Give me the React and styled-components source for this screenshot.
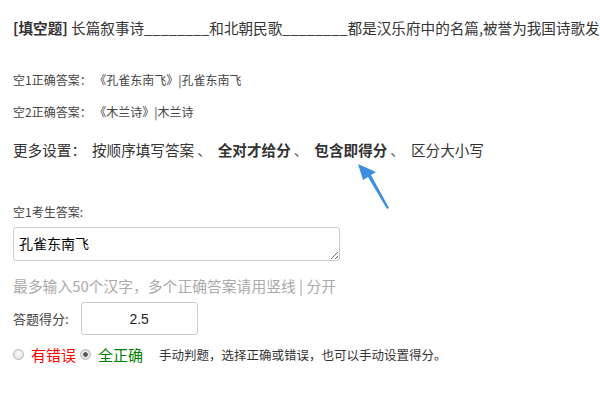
import styled, { createGlobalStyle } from "styled-components";

const GlobalStyle = createGlobalStyle`
body{
    margin:0;
    background:#fff;
    font-family:"Microsoft YaHei","Noto Sans CJK SC",sans-serif;
    color:#333;
}
`

const options = [
    { text: "按顺序填写答案", bold: false },
    { text: "全对才给分", bold: true },
    { text: "包含即得分", bold: true },
    { text: "区分大小写", bold: false },
]

export default function App() {
    return (
        <Page>
            <GlobalStyle />
            <Title><b>[填空题]</b> 长篇叙事诗________和北朝民歌________都是汉乐府中的名篇,被誉为我国诗歌发展史上的双璧</Title>
            <AnswerLine first>空1正确答案： 《孔雀东南飞》|孔雀东南飞</AnswerLine>
            <AnswerLine>空2正确答案： 《木兰诗》|木兰诗</AnswerLine>
            <Settings>
                <SettingsLabel>更多设置：</SettingsLabel>
                {options.map((o, i) => (
                    <span key={o.text}>
                        <Option bold={o.bold}>{o.text}</Option>
                        {i < options.length - 1 && <Sep>、</Sep>}
                    </span>
                ))}
                <Arrow width="40" height="50" viewBox="0 0 40 50">
                    <path d="M2 2 L20 10 L15 13 L33 46 L31 47 L12 15 L7 18 Z" fill="#3b8fe0" />
                </Arrow>
            </Settings>
            <FieldLabel>空1考生答案:</FieldLabel>
            <AnswerBox defaultValue="孔雀东南飞" />
            <Hint>最多输入50个汉字，多个正确答案请用竖线 | 分开</Hint>
            <ScoreRow>
                <span>答题得分:</span>
                <ScoreInput defaultValue="2.5" />
            </ScoreRow>
            <JudgeRow>
                <RadioLabel color="#ff0000"><Radio type="radio" name="judge" />有错误</RadioLabel>
                <RadioLabel color="#008000"><Radio type="radio" name="judge" defaultChecked />全正确</RadioLabel>
                <Note>手动判题，选择正确或错误，也可以手动设置得分。</Note>
            </JudgeRow>
        </Page>
    )
}

const Page = styled.div`
width:600px;
height:400px;
box-sizing:border-box;
padding:18px 0 0 13px;
overflow:hidden;
`
const Title = styled.div`
font-size:14.6px;
line-height:20px;
white-space:nowrap;
color:#333;
b{
    font-weight:700;
}
`
const AnswerLine = styled.div`
font-size:12px;
line-height:18px;
color:#444;
margin-top:${props => props.first ? "33px" : "14px"};
`
const Settings = styled.div`
position:relative;
display:flex;
align-items:center;
font-size:14.6px;
line-height:20px;
margin-top:19px;
white-space:nowrap;
`
const SettingsLabel = styled.span`
margin-right:6px;
`
const Option = styled.span`
font-weight:${props => props.bold ? 700 : 400};
color:#333;
`
const Sep = styled.span`
margin:0 6px 0 3px;
color:#555;
`
const Arrow = styled.svg`
position:absolute;
left:343px;
top:22px;
`
const FieldLabel = styled.div`
font-size:12px;
line-height:18px;
color:#444;
margin-top:43px;
`
const AnswerBox = styled.textarea`
display:block;
box-sizing:border-box;
width:327px;
height:34px;
margin-top:6px;
padding:5px 5px;
border:1px solid #ccc;
border-radius:3px;
font-family:"Noto Sans CJK SC",sans-serif;
font-size:14px;
line-height:20px;
color:#000;
resize:vertical;
overflow:hidden;
`
const Hint = styled.div`
font-size:14.8px;
line-height:20px;
color:#aaa;
margin-top:15px;
white-space:nowrap;
`
const ScoreRow = styled.div`
display:flex;
align-items:center;
gap:12px;
margin-top:6px;
font-size:13px;
color:#444;
`
const ScoreInput = styled.input`
box-sizing:border-box;
width:117px;
height:33px;
border:1px solid #ccc;
border-radius:3px;
text-align:center;
font-family:"Liberation Sans",Arial,sans-serif;
font-size:14px;
color:#222;
`
const JudgeRow = styled.div`
display:flex;
align-items:center;
margin-top:7px;
height:24px;
`
const RadioLabel = styled.label`
display:flex;
align-items:center;
font-size:15px;
color:${props => props.color};
margin-right:4px;
`
const Radio = styled.input`
appearance:none;
box-sizing:border-box;
width:11px;
height:11px;
margin:0 7px 0 0;
border:1px solid #b5b5b5;
border-radius:50%;
background:radial-gradient(circle at 50% 40%, #fafafa 0%, #dcdcdc 100%);
&:checked{
    background:radial-gradient(circle, #555 0, #555 2px, #e6e6e6 2.5px, #d4d4d4 100%);
}
`
const Note = styled.span`
font-size:12.5px;
color:#333;
margin-left:12px;
`
